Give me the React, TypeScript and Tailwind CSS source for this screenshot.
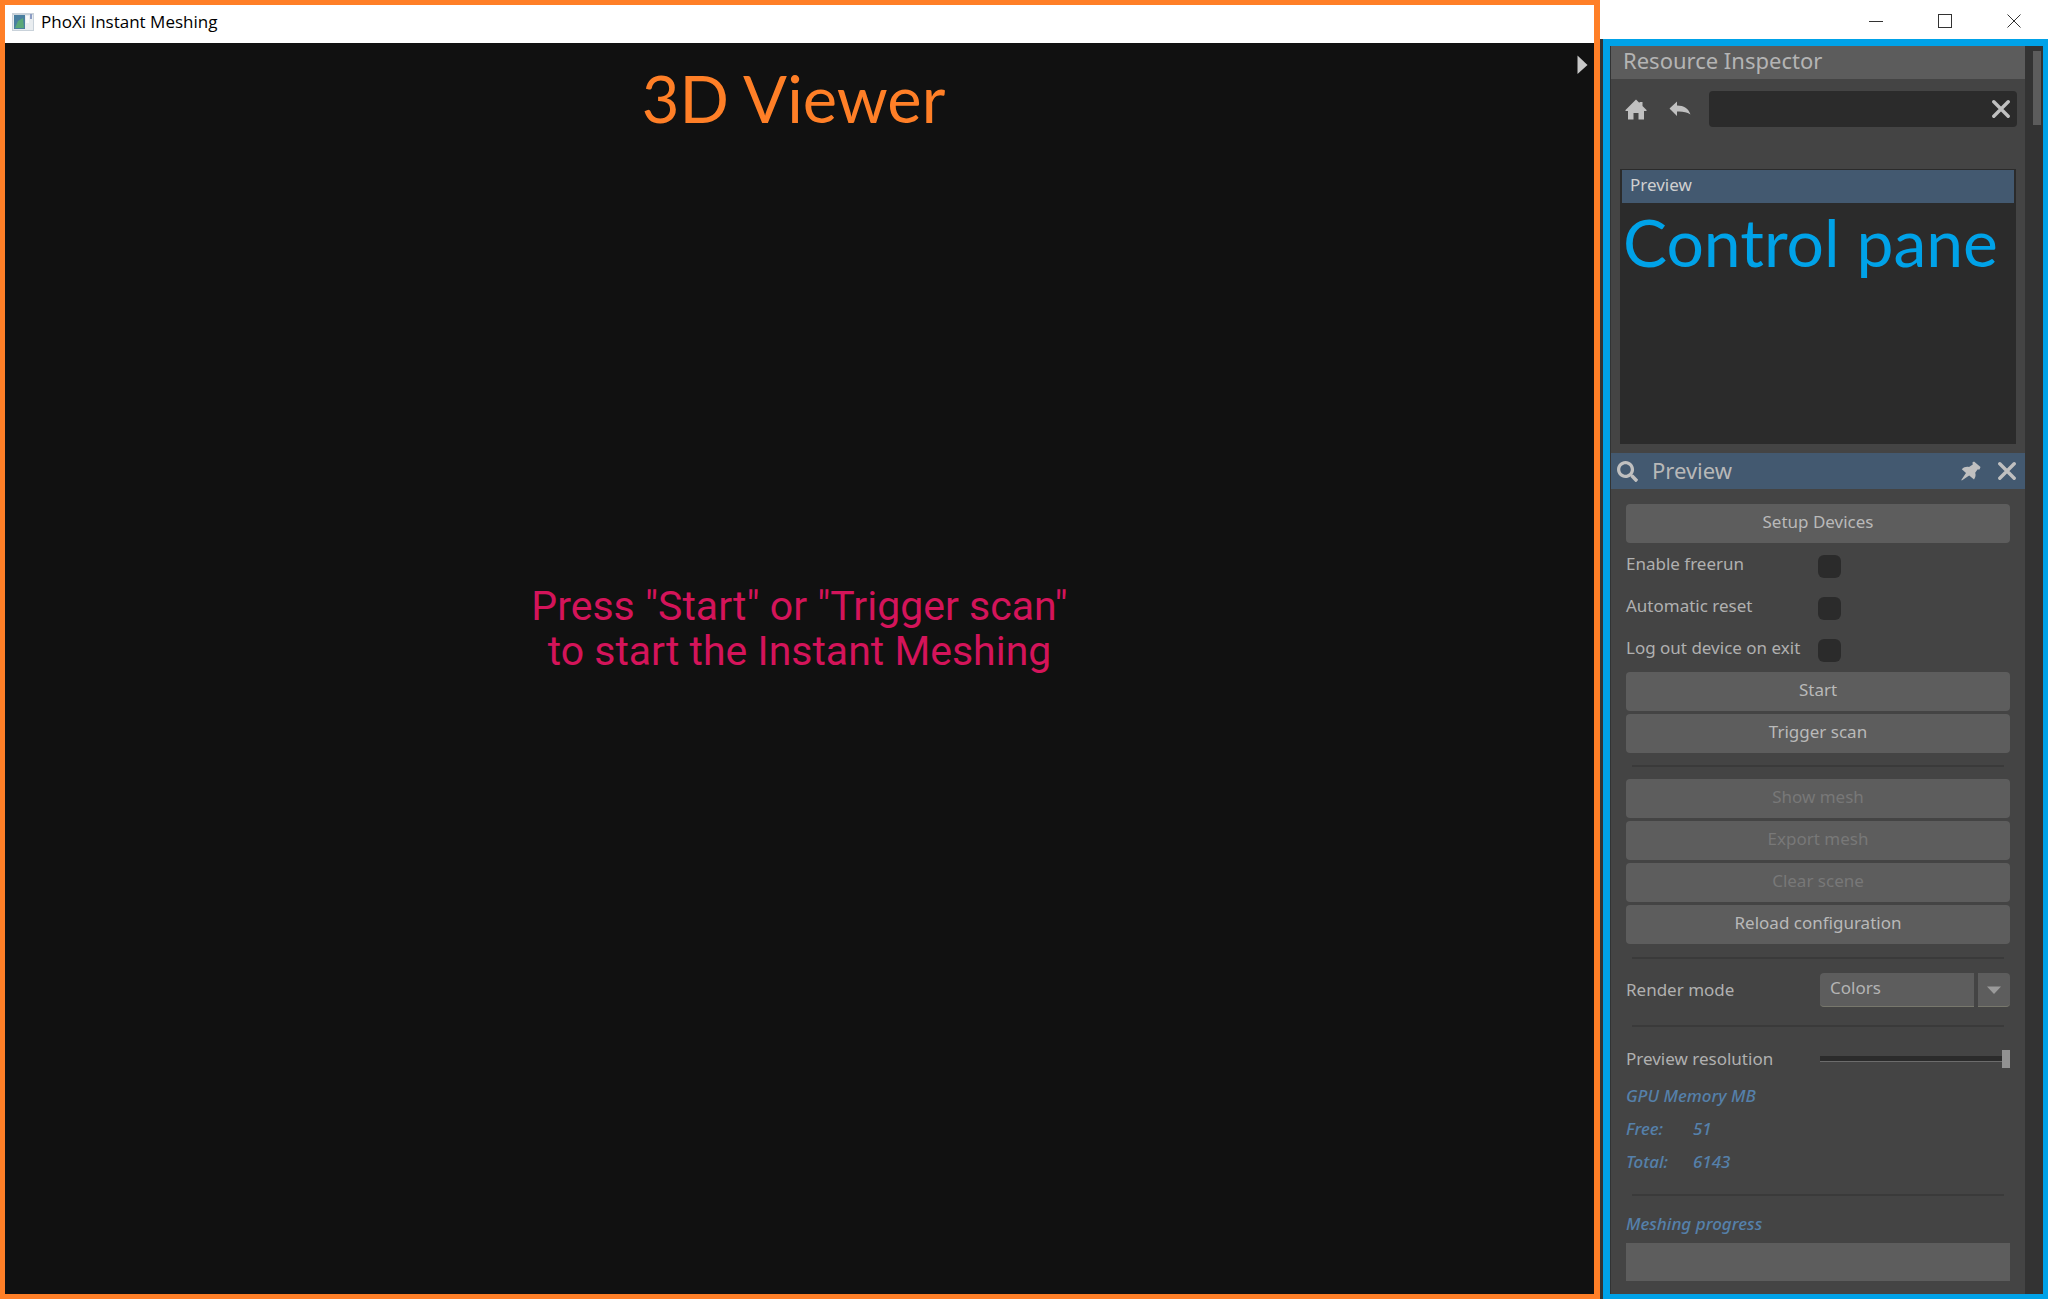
import React from "react";
import { clsx } from "clsx";
import { FaSearch } from "react-icons/fa";

function HomeIcon() {
    return (
        <svg viewBox="0 0 22 21" className="h-[21px] w-[22px]" aria-hidden="true">
            <path
                d="M11 0.5 L14.5 4 V3 H17.5 V7 L21.5 11 V12 H19 V20.5 H13.5 V14 H8.5 V20.5 H3 V12 H0.5 V11 Z"
                fill="currentColor"
            />
        </svg>
    );
}

function BackIcon() {
    return (
        <svg viewBox="0 0 22 16" className="h-4 w-[22px]" aria-hidden="true">
            <path
                d="M0.5 7.5 L8 0.5 V4.5 C15 4.5 19.5 7.5 21.5 13.5 C17.5 10.8 13.5 10.3 8 10.5 V15 Z"
                fill="currentColor"
            />
        </svg>
    );
}

function PinIcon() {
    return (
        <svg viewBox="0 0 20 20" className="size-5" aria-hidden="true">
            <path
                d="M13 0.5 L19.5 6 L18.5 8.5 L16.5 8.5 L14.2 11.8 C15 14 14.5 16.5 13 18.5 L8.2 14.5 L0.8 19.5 L0.3 19 L5 12 L0.8 8.2 C3 6 5.6 5.4 8 6 L11.8 3.6 L11.4 1.6 Z"
                fill="currentColor"
            />
        </svg>
    );
}

function CrossIcon() {
    return (
        <svg viewBox="0 0 18 18" className="size-[18px]" aria-hidden="true">
            <path
                d="M1.8 1.8 L16.2 16.2 M16.2 1.8 L1.8 16.2"
                stroke="currentColor"
                strokeWidth="3.4"
                strokeLinecap="round"
            />
        </svg>
    );
}

function AppIcon() {
    return (
        <svg viewBox="0 0 22 18" className="h-[18px] w-[22px]" aria-hidden="true">
            <rect width="22" height="18" fill="#c9d2da" />
            <rect x="1" y="2" width="20" height="15" fill="#e9edf0" />
            <rect x="2" y="2" width="11" height="14" fill="#4a7fa0" />
            <path d="M3 15 L6 8 L11 5 L12 15 Z" fill="#5aa878" />
            <rect x="14" y="3" width="3" height="7" fill="#f8f9fa" />
            <rect x="18" y="1" width="2" height="5" fill="#8c9dc4" />
        </svg>
    );
}

function PanelButton({
    children,
    disabled = false,
}: {
    children: React.ReactNode;
    disabled?: boolean;
}) {
    return (
        <button
            type="button"
            disabled={disabled}
            className={clsx(
                "flex h-[39px] w-full items-center justify-center rounded bg-[#5d5d5d] pb-1",
                disabled ? "text-[#787878]" : "text-[#b9b9b9]"
            )}
        >
            {children}
        </button>
    );
}

function CheckRow({ id, label }: { id: string; label: string }) {
    return (
        <div className="flex h-[42px] items-center">
            <label htmlFor={id} className="w-48 whitespace-nowrap pb-1">
                {label}
            </label>
            <input
                id={id}
                type="checkbox"
                className="size-[23px] appearance-none rounded-md bg-[#2b2b2b] checked:bg-[#8c8c8c]"
            />
        </div>
    );
}

function Divider() {
    return <hr className="mx-1.5 border-t-2 border-[#3a3a3a]" />;
}

function Viewer() {
    return (
        <section className="flex min-w-0 flex-1 flex-col border-[5px] border-r-[6px] border-[#ff7f27]">
            <header className="flex h-[38px] items-center gap-[7px] bg-white pl-[7px] pb-1">
                <AppIcon />
                <h1 className="font-['Open_Sans',sans-serif] text-[17px] text-black">
                    PhoXi Instant Meshing
                </h1>
            </header>
            <div className="relative flex flex-1 flex-col items-center bg-[#111111]">
                <h2 className="mt-2.5 pr-3 font-['Lato',sans-serif] text-[65px] leading-[90px] text-[#ff7f27]">
                    3D Viewer
                </h2>
                <div className="flex flex-1 items-center pb-[180px]">
                    <p className="text-center font-['Roboto',sans-serif] text-[41px] leading-[45px] text-[#d4145a]">
                        Press "Start" or "Trigger scan"
                        <br />
                        to start the Instant Meshing
                    </p>
                </div>
                <button
                    type="button"
                    aria-label="Expand"
                    className="absolute top-3 right-1.5 text-[#c8c8c8]"
                >
                    <svg viewBox="0 0 11 20" className="h-5 w-[11px]">
                        <path d="M0.5 0.5 L10.5 10 L0.5 19 Z" fill="currentColor" />
                    </svg>
                </button>
            </div>
        </section>
    );
}

function WindowControls() {
    return (
        <div className="flex h-[39px] items-center justify-end gap-[55px] bg-white pt-0.5 pr-[27px] text-[#333]">
            <button type="button" aria-label="Minimize">
                <svg viewBox="0 0 14 14" className="size-[14px]">
                    <path d="M0 7.5 H14" stroke="currentColor" />
                </svg>
            </button>
            <button type="button" aria-label="Maximize">
                <svg viewBox="0 0 14 14" className="size-[14px]">
                    <rect x="0.5" y="0.5" width="13" height="13" fill="none" stroke="currentColor" />
                </svg>
            </button>
            <button type="button" aria-label="Close">
                <svg viewBox="0 0 14 14" className="size-[14px]">
                    <path d="M0.5 0.5 L13.5 13.5 M13.5 0.5 L0.5 13.5" stroke="currentColor" />
                </svg>
            </button>
        </div>
    );
}

function ResourceInspector() {
    return (
        <>
            <h2 className="flex h-[33px] items-center bg-[#5c5c5c] pl-3 pb-1 text-[22px] text-[#b4b4b4]">
                Resource Inspector
            </h2>
            <div className="mt-3 flex h-9 items-center pl-[14px] pr-2 text-[#c0c0c0]">
                <button type="button" aria-label="Home">
                    <HomeIcon />
                </button>
                <button type="button" aria-label="Back" className="ml-[22px]">
                    <BackIcon />
                </button>
                <div className="ml-[18px] flex h-9 flex-1 items-center rounded bg-[#2b2b2b] pr-[7px]">
                    <input
                        type="text"
                        aria-label="Filter"
                        className="min-w-0 flex-1 bg-transparent px-2 outline-none"
                    />
                    <button type="button" aria-label="Clear filter">
                        <CrossIcon />
                    </button>
                </div>
            </div>
            <div className="mx-[9px] mt-[42px] h-[275px] border-2 border-t border-[#2b2b2b] bg-[#2b2b2b]">
                <button
                    type="button"
                    className="flex h-[33px] w-full items-center bg-[#435970] pb-1 pl-2 text-[#d0d0d0]"
                >
                    Preview
                </button>
                <p className="whitespace-nowrap pl-px font-['Lato',sans-serif] text-[66px] leading-[78px] text-[#00a2e8]">
                    Control pane
                </p>
            </div>
        </>
    );
}

function PreviewSettings() {
    return (
        <>
            <header className="mt-[9px] flex h-9 items-center bg-[#435970] pl-1.5 pr-[9px] text-[#c0c0c0]">
                <FaSearch className="size-[21px]" />
                <h2 className="ml-[14px] flex-1 pb-0.5 text-[22px] leading-[34px] text-[#b8b8b8]">
                    Preview
                </h2>
                <button type="button" aria-label="Pin">
                    <PinIcon />
                </button>
                <button type="button" aria-label="Close preview" className="ml-[17px]">
                    <CrossIcon />
                </button>
            </header>
            <div className="flex flex-col px-[15px] pt-[15px]">
                <PanelButton>Setup Devices</PanelButton>
                <div className="mt-0.5">
                    <CheckRow id="freerun" label="Enable freerun" />
                    <CheckRow id="reset" label="Automatic reset" />
                    <CheckRow id="logout" label="Log out device on exit" />
                </div>
                <div className="mt-px flex flex-col gap-[3px]">
                    <PanelButton>Start</PanelButton>
                    <PanelButton>Trigger scan</PanelButton>
                </div>
                <div className="py-3">
                    <Divider />
                </div>
                <div className="flex flex-col gap-[3px]">
                    <PanelButton disabled>Show mesh</PanelButton>
                    <PanelButton disabled>Export mesh</PanelButton>
                    <PanelButton disabled>Clear scene</PanelButton>
                    <PanelButton>Reload configuration</PanelButton>
                </div>
                <div className="pt-[13px] pb-3">
                    <Divider />
                </div>
                <div className="flex h-[38px] items-center">
                    <label htmlFor="render-mode" className="w-[194px]">
                        Render mode
                    </label>
                    <div className="relative flex-1">
                        <select
                            id="render-mode"
                            className="block h-[34px] w-full appearance-none rounded border-b border-[#77776c] bg-[#5d5d5d] pb-1 pl-2.5 text-[#b4b4b4]"
                        >
                            <option>Colors</option>
                        </select>
                        <span className="pointer-events-none absolute inset-y-0 right-0 flex w-9 items-center justify-center border-l-4 border-[#444444]">
                            <svg viewBox="0 0 14 8" className="h-2 w-[14px]">
                                <path d="M0 0.5 H14 L7 8 Z" fill="#9a9a9a" />
                            </svg>
                        </span>
                    </div>
                </div>
                <div className="pt-4 pb-3">
                    <Divider />
                </div>
                <div className="flex h-10 items-center">
                    <label htmlFor="resolution" className="w-[194px]">
                        Preview resolution
                    </label>
                    <input
                        id="resolution"
                        type="range"
                        defaultValue={100}
                        className="h-[18px] min-w-0 flex-1 appearance-none bg-transparent [&::-webkit-slider-runnable-track]:h-1.5 [&::-webkit-slider-runnable-track]:border-b [&::-webkit-slider-runnable-track]:border-[#6c6c6c] [&::-webkit-slider-runnable-track]:bg-[#2b2b2b] [&::-webkit-slider-thumb]:-mt-1.5 [&::-webkit-slider-thumb]:h-[18px] [&::-webkit-slider-thumb]:w-2 [&::-webkit-slider-thumb]:appearance-none [&::-webkit-slider-thumb]:bg-[#919191]"
                    />
                </div>
                <dl className="grid grid-cols-[67px_1fr] font-medium italic leading-[33px] text-[#5580aa]">
                    <dt className="col-span-2">GPU Memory MB</dt>
                    <dt>Free:</dt>
                    <dd>51</dd>
                    <dt>Total:</dt>
                    <dd>6143</dd>
                </dl>
                <div className="pt-4 pb-3">
                    <Divider />
                </div>
                <p className="pb-1 font-medium italic leading-[31px] text-[#5580aa]">
                    Meshing progress
                </p>
                <div
                    role="progressbar"
                    aria-label="Meshing progress"
                    aria-valuenow={0}
                    className="h-[38px] bg-[#5d5d5d]"
                />
            </div>
        </>
    );
}

function ControlPane() {
    return (
        <aside className="flex w-[448px] shrink-0 flex-col">
            <WindowControls />
            <div className="flex flex-1 bg-[#333333] pl-[3px]">
                <div className="flex flex-1 border-[5px] border-t-[7px] border-l-[7px] border-[#00a2e8]">
                    <div className="min-w-0 flex-1 border-l border-[#333333] bg-[#444444] font-['Noto_Sans',sans-serif] text-[17px] text-[#b0b0b0]">
                        <ResourceInspector />
                        <PreviewSettings />
                    </div>
                    <div className="w-[18px] bg-[#333333] pt-[5px] pl-2">
                        <div className="h-[74px] w-2 bg-[#5c5c5c]" />
                    </div>
                </div>
            </div>
        </aside>
    );
}

export default function App() {
    return (
        <div className="flex min-h-screen bg-white pb-[3px]">
            <Viewer />
            <ControlPane />
        </div>
    );
}
